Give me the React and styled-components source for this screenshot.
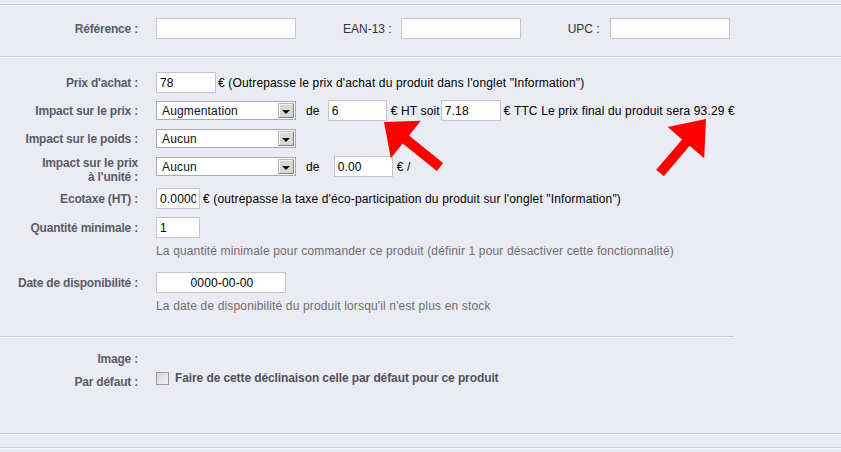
import React from "react";
import styled, { createGlobalStyle } from "styled-components";

const GlobalStyle = createGlobalStyle`
  html, body {
    margin: 0;
    padding: 0;
  }
  body {
    background: #ebecf3;
    font-family: "Liberation Sans", Arial, sans-serif;
    font-size: 12px;
    letter-spacing: 0.15px;
    color: #000;
  }
`;

const Page = styled.div`
  position: relative;
  width: 841px;
  height: 452px;
  padding-top: 4px;
  box-sizing: border-box;
  overflow: hidden;
`;

const Rule = styled.div`
  width: ${(p) => p.$width || "100%"};
  margin-top: ${(p) => p.$mt || 0}px;
  border-top: 1px solid #c8c9d1;
  border-bottom: 1px solid #f6f7fa;
`;

const TopRow = styled.div`
  display: flex;
  align-items: center;
  height: 21px;
  padding: 12px 0 17px;
`;

const Section = styled.div`
  padding: ${(p) => p.$pad};
`;

const Row = styled.div`
  display: flex;
  align-items: ${(p) => (p.$top ? "flex-start" : "center")};
  min-height: ${(p) => p.$h ?? 21}px;
  margin-top: ${(p) => p.$mt ?? 7}px;
`;

const Label = styled.label`
  flex: 0 0 138px;
  text-align: right;
  font-weight: bold;
  letter-spacing: -0.2px;
  color: #5a5b6a;
  line-height: 14px;
  padding-top: ${(p) => p.$pt || 0}px;
`;

const PlainLabel = styled.span`
  margin-left: ${(p) => p.$ml}px;
  color: #333;
  letter-spacing: 0;
  white-space: nowrap;
`;

const Field = styled.div`
  display: flex;
  align-items: center;
  height: 21px;
  margin-left: 18px;
`;

const TextInput = styled.input`
  width: ${(p) => p.$w}px;
  height: 21px;
  box-sizing: border-box;
  margin: 0 0 0 ${(p) => p.$ml || 0}px;
  padding: 0 ${(p) => p.$pr ?? 1}px 0 3px;
  border: 1px solid #c4c5cb;
  background: #fff;
  font-family: "Liberation Sans", Arial, sans-serif;
  font-size: 12px;
  letter-spacing: 0.15px;
  color: #000;
  text-align: ${(p) => (p.$center ? "center" : "left")};
  outline: none;
`;

const Txt = styled.span`
  margin-left: ${(p) => p.$ml || 0}px;
  white-space: nowrap;
`;

const Select = styled.div`
  display: flex;
  align-items: center;
  justify-content: space-between;
  width: 140px;
  height: 19px;
  box-sizing: border-box;
  padding: 0 1px 0 5px;
  border: 1px solid #a9abb3;
  background: #fff;
  color: #111;
`;

const DropButton = styled.span`
  display: flex;
  align-items: center;
  justify-content: center;
  width: 16px;
  height: 15px;
  box-sizing: border-box;
  padding-top: 2px;
  background: #d9d8d3;
  border: 1px solid;
  border-color: #b9b9b9 #7d7d7d #7d7d7d #b9b9b9;
  box-shadow: inset 1px 1px 0 #f5f5f5;

  &::after {
    content: "";
    border-left: 4px solid transparent;
    border-right: 4px solid transparent;
    border-top: 4px solid #111;
  }
`;

const Help = styled.div`
  margin: ${(p) => p.$mt}px 0 0 156px;
  line-height: 14px;
  color: #6e6e6e;
`;

const CheckGroup = styled.div`
  display: flex;
  align-items: center;
  height: 14px;
  margin-left: 18px;
`;

const CheckBox = styled.span`
  width: 13px;
  height: 13px;
  box-sizing: border-box;
  border: 1px solid #9a9a9a;
  background: linear-gradient(135deg, #d6d6d6, #f4f4f4);
`;

const CheckText = styled.span`
  margin-left: 6px;
  font-weight: bold;
  letter-spacing: -0.1px;
  color: #4f505d;
  white-space: nowrap;
`;

const Overlay = styled.svg`
  position: absolute;
  left: 0;
  top: 0;
  pointer-events: none;
`;

function arrowPoints([tx, ty], [ex, ey], headLen, headHalf, shaftHalf) {
  const len = Math.hypot(ex - tx, ey - ty);
  const ux = (ex - tx) / len;
  const uy = (ey - ty) / len;
  const px = -uy;
  const py = ux;
  const bx = tx + ux * headLen;
  const by = ty + uy * headLen;
  const pts = [
    [tx, ty],
    [bx + px * headHalf, by + py * headHalf],
    [bx + px * shaftHalf, by + py * shaftHalf],
    [ex + px * shaftHalf, ey + py * shaftHalf],
    [ex - px * shaftHalf, ey - py * shaftHalf],
    [bx - px * shaftHalf, by - py * shaftHalf],
    [bx - px * headHalf, by - py * headHalf],
  ];
  return pts.map(([x, y]) => `${x.toFixed(1)},${y.toFixed(1)}`).join(" ");
}

const Dropdown = ({ value }) => (
  <Select>
    <span>{value}</span>
    <DropButton />
  </Select>
);

export default function App() {
  return (
    <Page>
      <GlobalStyle />
      <Rule />

      <TopRow>
        <Label>Référence :</Label>
        <Field>
          <TextInput $w={140} readOnly defaultValue="" />
          <PlainLabel $ml={47}>EAN-13 :</PlainLabel>
          <TextInput $w={120} $ml={9} readOnly defaultValue="" />
          <PlainLabel $ml={47}>UPC :</PlainLabel>
          <TextInput $w={120} $ml={10} readOnly defaultValue="" />
        </Field>
      </TopRow>

      <Rule />

      <Section $pad="14px 0 23px">
        <Row $mt={0}>
          <Label>Prix d'achat :</Label>
          <Field>
            <TextInput $w={60} readOnly defaultValue="78" />
            <Txt $ml={2}>€ (Outrepasse le prix d'achat du produit dans l'onglet "Information")</Txt>
          </Field>
        </Row>

        <Row>
          <Label>Impact sur le prix :</Label>
          <Field>
            <Dropdown value="Augmentation" />
            <Txt $ml={10}>de</Txt>
            <TextInput $w={59} $ml={8} readOnly defaultValue="6" />
            <Txt $ml={4}>€ HT soit</Txt>
            <TextInput $w={60} $ml={1} readOnly defaultValue="7.18" />
            <Txt $ml={3}>€ TTC Le prix final du produit sera 93.29 €</Txt>
          </Field>
        </Row>

        <Row>
          <Label>Impact sur le poids :</Label>
          <Field>
            <Dropdown value="Aucun" />
          </Field>
        </Row>

        <Row $top $h={28}>
          <Label>
            Impact sur le prix
            <br />
            à l'unité :
          </Label>
          <Field>
            <Dropdown value="Aucun" />
            <Txt $ml={10}>de</Txt>
            <TextInput $w={59} $ml={14} readOnly defaultValue="0.00" />
            <Txt $ml={4}>€ /</Txt>
          </Field>
        </Row>

        <Row $mt={4}>
          <Label>Ecotaxe (HT) :</Label>
          <Field>
            <TextInput $w={44} $pr={3} readOnly defaultValue="0.000000" />
            <Txt $ml={3}>€ (outrepasse la taxe d'éco-participation du produit sur l'onglet "Information")</Txt>
          </Field>
        </Row>

        <Row $mt={8}>
          <Label>Quantité minimale :</Label>
          <Field>
            <TextInput $w={44} readOnly defaultValue="1" />
          </Field>
        </Row>
        <Help $mt={6}>
          La quantité minimale pour commander ce produit (définir 1 pour désactiver cette fonctionnalité)
        </Help>

        <Row $mt={14}>
          <Label>Date de disponibilité :</Label>
          <Field>
            <TextInput $w={130} $center readOnly defaultValue="0000-00-00" />
          </Field>
        </Row>
        <Help $mt={6}>La date de disponibilité du produit lorsqu'il n'est plus en stock</Help>
      </Section>

      <Rule $width="734px" />

      <Section $pad="14px 0 44px">
        <Row $mt={0} $h={14}>
          <Label>Image :</Label>
        </Row>
        <Row $mt={5} $top $h={14}>
          <Label $pt={4}>Par défaut :</Label>
          <CheckGroup>
            <CheckBox />
            <CheckText>Faire de cette déclinaison celle par défaut pour ce produit</CheckText>
          </CheckGroup>
        </Row>
      </Section>

      <Rule />
      <Rule $mt={12} />

      <Overlay width="841" height="452" viewBox="0 0 841 452">
        <polygon fill="#ff0000" points={arrowPoints([384, 122], [440, 167], 28, 24, 5)} />
        <polygon fill="#ff0000" points={arrowPoints([706, 119], [660, 173], 31, 24, 5)} />
      </Overlay>
    </Page>
  );
}
